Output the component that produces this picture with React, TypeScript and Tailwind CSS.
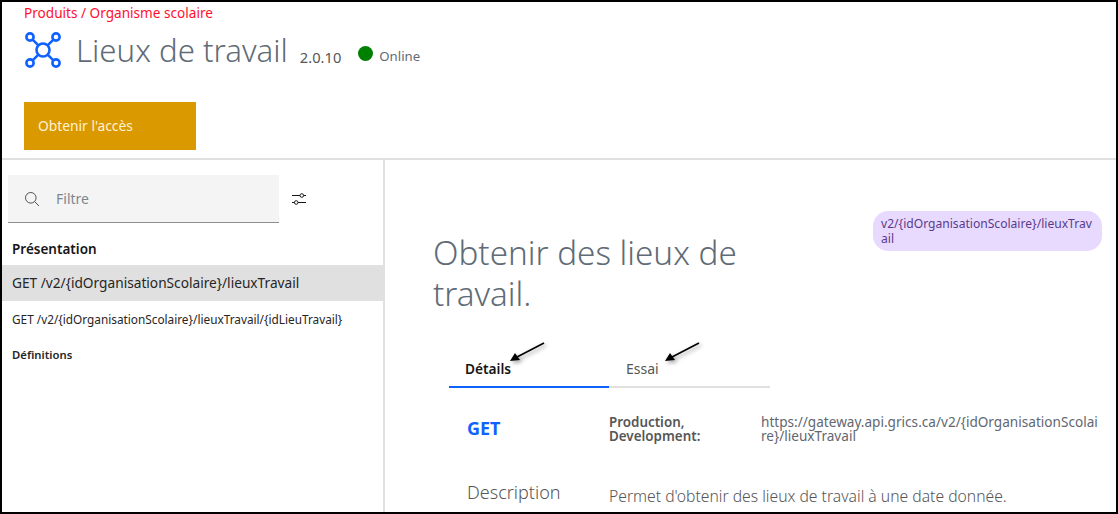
const font = { fontFamily: '"Noto Sans", "Liberation Sans", sans-serif' };

function ApiIcon() {
  return (
    <svg width="38" height="38" viewBox="0 0 38 38" fill="none" stroke="#0f62fe" strokeWidth="2.6">
      <circle cx="19" cy="19" r="6.5" />
      <circle cx="6" cy="6" r="3.6" />
      <circle cx="32" cy="6" r="3.6" />
      <circle cx="6" cy="32" r="3.6" />
      <circle cx="32" cy="32" r="3.6" />
      <path d="M8.6 8.6 14.4 14.4M29.4 8.6 23.6 14.4M8.6 29.4 14.4 23.6M29.4 29.4 23.6 23.6" />
    </svg>
  );
}

function SearchIcon() {
  return (
    <svg width="16" height="16" viewBox="0 0 16 16" fill="none" stroke="#525252" strokeWidth="1">
      <circle cx="6.8" cy="6.8" r="5.3" />
      <path d="M10.6 10.6 15 15" />
    </svg>
  );
}

function SlidersIcon() {
  return (
    <svg width="16" height="16" viewBox="0 0 16 16" fill="none" stroke="#161616" strokeWidth="1">
      <path d="M1 4.5h8M12.6 4.5H15M1 11.5h2.4M7 11.5h8" />
      <circle cx="10.8" cy="4.5" r="1.8" />
      <circle cx="5.2" cy="11.5" r="1.8" />
    </svg>
  );
}

function Arrow() {
  return (
    <svg width="38" height="24" viewBox="0 0 38 24" style={{ filter: 'drop-shadow(2px 2px 2px rgba(0,0,0,.4))' }}>
      <path d="M35 1 8 15" stroke="#000" strokeWidth="1.6" />
      <path d="M1 19 6 11 11 18Z" fill="#000" />
    </svg>
  );
}

export default function App() {
  return (
    <div className="w-[1118px] h-[514px] bg-white border-2 border-black overflow-hidden flex flex-col" style={font}>
      <header className="h-[158px] shrink-0 border-b-2 border-[#e0e0e0] pl-[22px] flex flex-col">
        <div className="h-[22px] pt-[2px] text-[13.6px] leading-[18px] text-[#ff0f2f]">Produits / Organisme scolaire</div>
        <div className="h-[40px] mt-[6px] flex items-center">
          <ApiIcon />
          <h1 className="ml-[14px] text-[31.2px] leading-[40px] font-light text-[#5f6b76]">Lieux de travail</h1>
          <span className="ml-[12px] mt-[14px] text-[14.7px] text-[#565656]">2.0.10</span>
          <span className="ml-[17px] mt-[7px] w-[15px] h-[15px] rounded-full bg-[#008000]" />
          <span className="ml-[6px] mt-[14px] text-[13.2px] text-[#5f6b76]">Online</span>
        </div>
        <button className="mt-[32px] w-[172px] h-[48px] bg-[#db9900] text-[#fff2d6] text-[13.8px] text-left pl-[14px]">Obtenir l'accès</button>
      </header>
      <div className="flex-1 flex min-h-0">
        <aside className="w-[383px] shrink-0 border-r-2 border-[#e0e0e0] flex flex-col">
          <div className="flex items-center pt-[15px] pl-[6px]">
            <div className="w-[271px] h-[48px] bg-[#f4f4f4] border-b border-[#8d8d8d] flex items-center pl-[16px]">
              <SearchIcon />
              <span className="ml-[16px] text-[14px] text-[#7d8690]">Filtre</span>
            </div>
            <span className="ml-[12px] flex"><SlidersIcon /></span>
          </div>
          <div className="mt-[16px] h-[20px] pl-[10px] text-[13.5px] leading-[20px] font-semibold text-[#161616]">Présentation</div>
          <div className="mt-[6px] h-[36px] bg-[#e0e0e0] pl-[10px] text-[13.7px] leading-[36px] text-[#262626]">GET /v2/{'{idOrganisationScolaire}'}/lieuxTravail</div>
          <div className="h-[36px] pl-[10px] text-[11.8px] leading-[36px] text-[#262626]">GET /v2/{'{idOrganisationScolaire}'}/lieuxTravail/{'{idLieuTravail}'}</div>
          <div className="h-[36px] pl-[10px] text-[11.3px] leading-[36px] font-semibold text-[#262626]">Définitions</div>
        </aside>
        <main className="flex-1 min-w-0 pl-[48px]">
          <div className="flex">
            <h2 className="w-[340px] mt-[72px] text-[33.2px] leading-[41px] font-light text-[#5f6b76]">Obtenir des lieux de travail.</h2>
            <div className="ml-[100px] mt-[51px] w-[229px] h-[40px] rounded-[15px] bg-[#e8daff] px-[8px] py-[5px] text-[12.1px] leading-[15px] text-[#5a3a8c] break-all">v2/{'{idOrganisationScolaire}'}/lieuxTravail</div>
          </div>
          <div className="relative ml-[16px] mt-[32px] flex w-[321px] h-[42px]">
            <div className="w-[160px] border-b-2 border-[#0f62fe] pl-[16px] pt-[14px] text-[13.7px] leading-[18px] font-semibold text-[#161616]">Détails</div>
            <div className="w-[161px] border-b-2 border-[#e0e0e0] pl-[17px] pt-[14px] text-[14px] leading-[18px] text-[#565656]">Essai</div>
            <div className="absolute left-[60px] -top-[4px] flex"><Arrow /></div>
            <div className="absolute left-[215px] -top-[4px] flex"><Arrow /></div>
          </div>
          <div className="ml-[34px] mt-[27px] flex">
            <div className="w-[142px] text-[18px] leading-[26px] font-bold text-[#0f62fe]">GET</div>
            <div className="w-[152px] text-[13.4px] leading-[14px] font-semibold text-[#565656]">Production,<br />Development:</div>
            <div className="w-[341px] text-[13.6px] leading-[14px] text-[#5f6770] break-all">https://gateway.api.grics.ca/v2/{'{idOrganisationScolaire}'}/lieuxTravail</div>
          </div>
          <div className="ml-[34px] mt-[37px] flex">
            <div className="w-[142px] text-[18px] leading-[24px] font-light text-[#565656]">Description</div>
            <div className="mt-[6px] text-[15.7px] leading-[20px] font-light text-[#565656]">Permet d'obtenir des lieux de travail à une date donnée.</div>
          </div>
        </main>
      </div>
    </div>
  );
}
